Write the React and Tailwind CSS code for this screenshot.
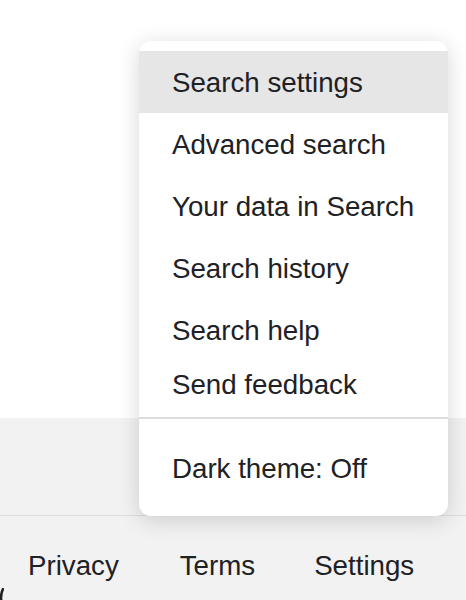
const menuItems = [
  { label: "Search settings", active: true },
  { label: "Advanced search" },
  { label: "Your data in Search" },
  { label: "Search history" },
  { label: "Search help" },
];

const App = () => {
  return (
    <div className="relative w-[466px] h-[600px] overflow-hidden bg-white font-['Liberation_Sans',Arial,sans-serif] text-[#202124]">
      <div className="h-[418px] bg-white"></div>
      <div className="h-[98px] bg-[#f2f2f2] border-b border-[#dadce0]"></div>
      <div className="h-[84px] bg-[#f2f2f2] flex items-center pl-[28px] pt-[15px] text-[27.7px] leading-[28px]">
        <a href="#">Privacy</a>
        <a href="#" className="ml-[61px]">Terms</a>
        <a href="#" className="ml-[59px]">Settings</a>
      </div>

      <svg className="absolute left-0 bottom-0" width="4" height="12" viewBox="0 0 4 12">
        <path d="M3.5 0 Q0.5 5 1.2 12" stroke="#202124" strokeWidth="2.5" fill="none" />
      </svg>

      <div className="absolute left-[139px] top-[41px] w-[309px] h-[475px] bg-white rounded-[12px] shadow-[0_4px_22px_rgba(0,0,0,0.16)] pt-[10px] text-[27.7px] leading-[28px]">
        {menuItems.map((item) => (
          <div
            key={item.label}
            className={`h-[62px] flex items-center pl-[33px] pt-[2px] ${item.active ? "bg-[#e6e6e6]" : ""}`}
          >
            {item.label}
          </div>
        ))}
        <div className="h-[46px] flex items-center pl-[33px] pt-[2px]">Send feedback</div>
        <div className="mt-[10px] h-[2px] bg-[#dadce0]"></div>
        <div className="mt-[18px] h-[62px] flex items-center pl-[33px] pt-[2px]">Dark theme: Off</div>
      </div>
    </div>
  );
};

export default App;
